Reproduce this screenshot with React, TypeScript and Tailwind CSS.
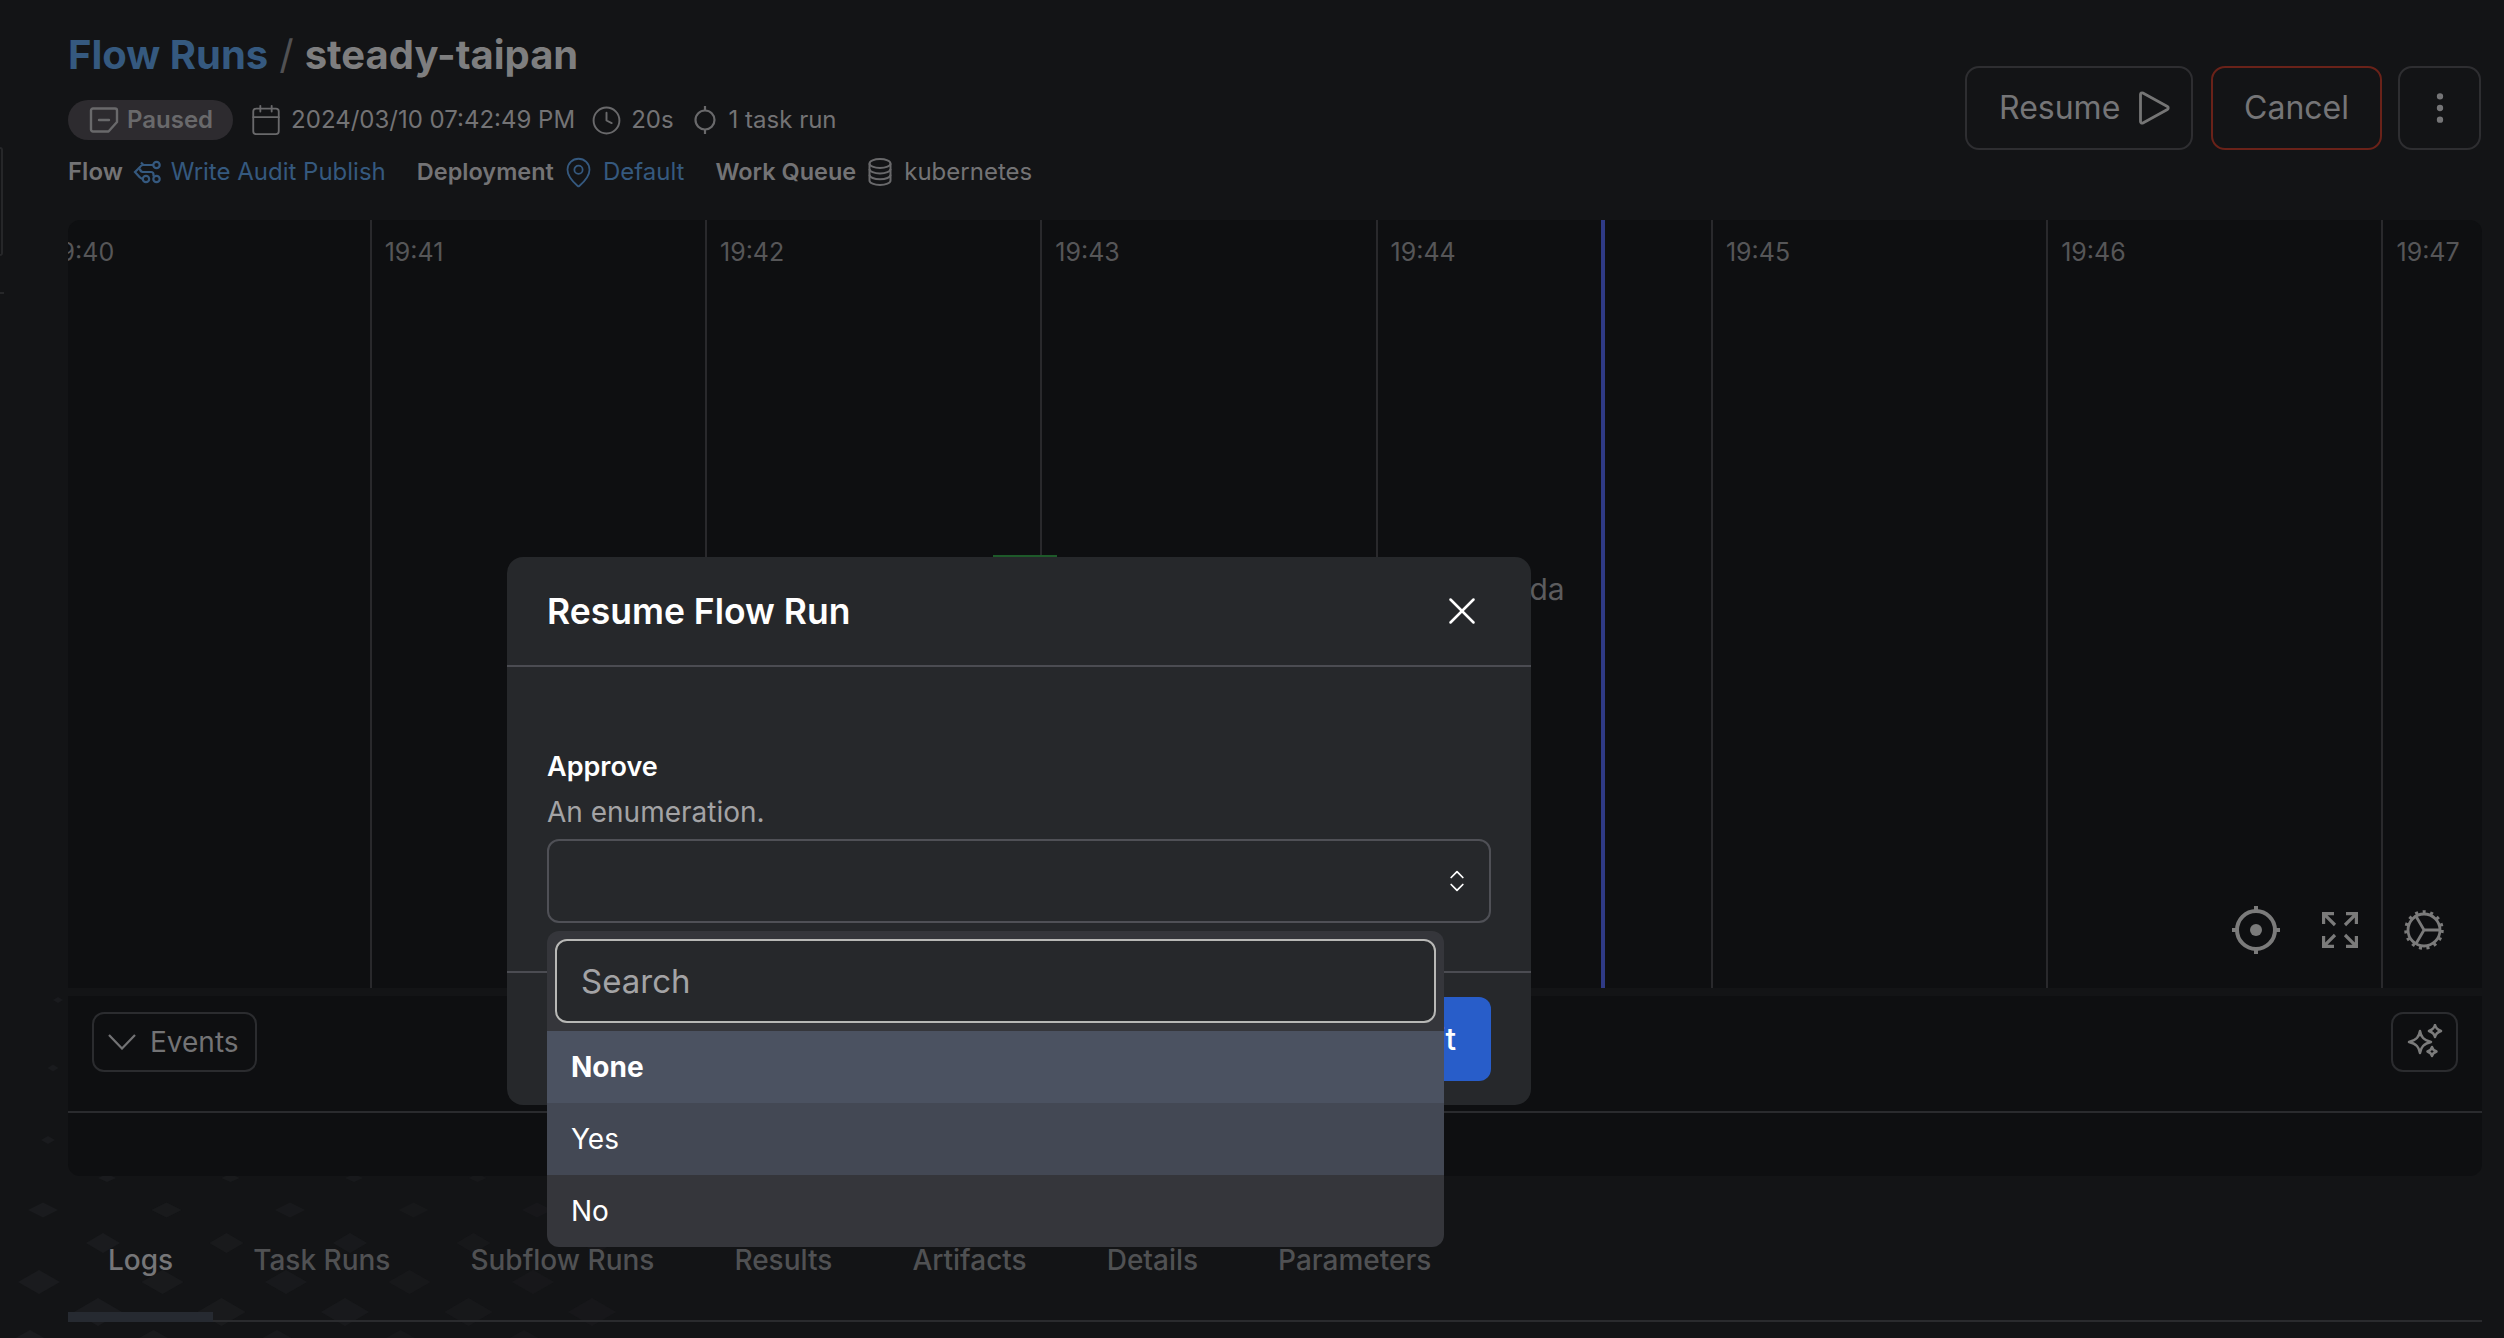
import { Calendar, ChevronsUpDown, Clock, EllipsisVertical, MapPin, X } from 'lucide-react';

const hours = ['19:40', '19:41', '19:42', '19:43', '19:44', '19:45', '19:46', '19:47'];
const tabs = ['Logs', 'Task Runs', 'Subflow Runs', 'Results', 'Artifacts', 'Details', 'Parameters'];

// faint diamonds behind the tab strip: y, first x, width, height
const diamondRows = [
  [1000, 58, 10, 6],
  [1068, 53, 11, 7],
  [1140, 48, 14, 8],
  [1178, 107, 18, 8],
  [1210, 43, 30, 15],
  [1243, 103, 34, 20],
  [1282, 39, 42, 24],
  [1312, 98, 48, 28],
  [1345, 30, 54, 30],
];

function Diamonds() {
  return (
    <svg className="absolute left-0 top-0" width="1000" height="1338" fill="#1a1b1e">
      {diamondRows.map(([y, x0, w, h]) =>
        [0, 1, 2, 3, 4].map((i) => {
          const x = x0 + i * 123.5;
          return (
            <polygon
              key={`${y}-${i}`}
              points={`${x - w / 2},${y} ${x},${y - h / 2} ${x + w / 2},${y} ${x},${y + h / 2}`}
              opacity={1 - i * 0.12}
            />
          );
        }),
      )}
    </svg>
  );
}

function PausedIcon() {
  return (
    <svg width="30" height="26" viewBox="0 0 30 26" fill="none" stroke="#69696b" strokeWidth="2.4" strokeLinejoin="round">
      <path d="M2 3.5A2 2 0 0 1 4 1.5h22a2 2 0 0 1 2 2V15l-8.5 9.5H4a2 2 0 0 1-2-2Z" />
      <path d="M10 13h10" strokeLinecap="round" />
    </svg>
  );
}

function TaskRunIcon() {
  return (
    <svg width="24" height="30" viewBox="0 0 24 30" fill="none" stroke="#69696b" strokeWidth="2.2">
      <circle cx="12" cy="15" r="9.5" />
      <path d="M12 1v4.5M12 24.5V29" />
    </svg>
  );
}

function FlowIcon() {
  return (
    <svg width="28" height="24" viewBox="0 0 28 24" fill="none" stroke="#35597f" strokeWidth="2.2">
      <circle cx="23.500" cy="5" r="3.200" />
      <circle cx="23.500" cy="19" r="3.200" />
      <circle cx="13" cy="19" r="3.200" />
      <path d="M20.300 5h-9.800a4 4 0 0 0-3.500 2L2 12l4.500 5c.8.900 1.800 1.500 3.300 2" />
      <path d="M7 8.500A3.500 3.500 0 0 0 9.500 12h8.500a2.500 2.500 0 0 1 2.500 2.500v2" />
      <path d="M8 2.500 10.500 5" />
    </svg>
  );
}

function StackIcon() {
  return (
    <svg width="24" height="28" viewBox="0 0 24 28" fill="none" stroke="#69696b" strokeWidth="2">
      <ellipse cx="12" cy="5.500" rx="10.500" ry="4.500" />
      <path d="M1.500 5.500v17c0 2.500 4.700 4.500 10.500 4.500s10.500-2 10.500-4.500v-17" />
      <path d="M1.500 11c0 2.500 4.700 4.500 10.500 4.500S22.500 13.500 22.500 11" />
      <path d="M1.500 16.800c0 2.500 4.700 4.500 10.500 4.500s10.500-2 10.500-4.500" />
    </svg>
  );
}

function PlayIcon() {
  return (
    <svg width="32" height="34" viewBox="0 0 32 34" fill="none" stroke="#757575" strokeWidth="2.800" strokeLinejoin="round">
      <path d="M2.500 3.500c0-1.300 1.300-2 2.400-1.400l24.500 13.500c1.100.6 1.100 2.200 0 2.800L4.900 31.900c-1.100.6-2.400-.1-2.400-1.400Z" />
    </svg>
  );
}

function TargetIcon() {
  return (
    <svg width="48" height="48" viewBox="0 0 48 48" fill="none" stroke="#7b7b7b" strokeWidth="4">
      <circle cx="24" cy="24" r="19" />
      <circle cx="24" cy="24" r="6" fill="#7b7b7b" stroke="none" />
      <path d="M24 0v6M24 42v6M0 24h6M42 24h6" />
    </svg>
  );
}

function ExpandIcon() {
  return (
    <svg width="36" height="36" viewBox="0 0 36 36" fill="none" stroke="#7b7b7b" strokeWidth="3.200">
      <path d="M1.600 12V1.600H12M1.600 1.600l11.400 11.400M34.400 12V1.600H24M34.400 1.600 23 13M1.600 24v10.400H12M1.600 34.400 13 23M34.400 24v10.400H24M34.400 34.400 23 23" />
    </svg>
  );
}

function GearIcon() {
  return (
    <svg width="40" height="40" viewBox="0 0 40 40" fill="none" stroke="#7b7b7b">
      <circle cx="20" cy="20" r="16" strokeWidth="2.800" />
      <circle cx="20" cy="20" r="18" strokeWidth="3.500" strokeDasharray="3 4.540" />
      <path d="M20 20h16M20 20l-8-13.800M20 20l-8 13.800" strokeWidth="2.800" />
    </svg>
  );
}

function SparkIcon() {
  return (
    <svg width="36" height="36" viewBox="0 0 36 36" fill="none" stroke="#7b7b7b" strokeWidth="2.500" strokeLinejoin="round">
      <path d="M13 7c1 6 3.500 9 11 11-7.500 2-10 5-11 11-1-6-3.500-9-11-11 7.500-2 10-5 11-11Z" />
      <path d="M28 1c.6 3 2 4.500 6 6-4 1.500-5.400 3-6 6-.6-3-2-4.500-6-6 4-1.500 5.400-3 6-6Z" />
      <path d="M25 23c.4 2.200 1.500 3.300 4.500 4.500-3 1.200-4.100 2.300-4.500 4.500-.4-2.200-1.500-3.300-4.500-4.500 3-1.200 4.100-2.300 4.500-4.500Z" />
    </svg>
  );
}

function ChartPanel() {
  return (
    <div className="relative h-[768px] overflow-hidden rounded-t-xl bg-[#0e0f11]">
      <div className="-ml-[33.600px] flex h-full">
        {hours.map((hour) => (
          <div key={hour} className="h-full w-[335.300px] shrink-0 border-l-2 border-[#29292c] pl-[13px] pt-[17px] text-[25px] leading-[30px] text-[#565658]">
            {hour}
          </div>
        ))}
      </div>
      <div className="absolute left-[1533px] top-0 h-full w-[4px] bg-[#2f3a85]" />
      <div className="absolute left-[925px] top-[335px] h-[3px] w-[64px] bg-[#1e5a2a]" />
      <div className="absolute left-[1383px] top-[349px] text-[30px] leading-[40px] text-[#5c5c5e]">Lambda</div>
      <div className="absolute left-[2164px] top-[686px] flex items-center">
        <TargetIcon />
        <div className="ml-[42px]">
          <ExpandIcon />
        </div>
        <div className="ml-[46px]">
          <GearIcon />
        </div>
      </div>
    </div>
  );
}

function EventsPanel() {
  return (
    <div className="mt-2 h-[180px] rounded-b-xl bg-[#0e0f11]">
      <div className="flex h-[117px] items-start justify-between border-b-2 border-[#2a2b2e] px-6 pt-4">
        <button className="flex h-[60px] w-[165px] items-center gap-[14px] rounded-xl border-2 border-[#2b2c2f] pl-[14px] text-[28px] text-[#737375]">
          <svg width="28" height="16" viewBox="0 0 28 16" fill="none" stroke="#737375" strokeWidth="2.200">
            <path d="M1 1l13 13.500L27 1" />
          </svg>
          Events
        </button>
        <button className="flex h-[60px] w-[67px] items-center justify-center rounded-xl border-2 border-[#2b2c2f]">
          <SparkIcon />
        </button>
      </div>
    </div>
  );
}

function ResumeModal() {
  return (
    <div className="absolute left-[507px] top-[557px] flex h-[548px] w-[1024px] flex-col rounded-2xl bg-[#26282b]">
      <div className="flex h-[110px] items-center justify-between border-b-2 border-[#4b4c52] pl-10 pr-[46px]">
        <h2 className="mt-[2px] text-[35.500px] font-semibold text-white">Resume Flow Run</h2>
        <X size={46} strokeWidth={1.300} className="text-white" />
      </div>
      <div className="h-[306px] border-b-2 border-[#4b4c52] px-10 pt-[84px]">
        <div className="text-[27px] font-semibold leading-[32px] text-white">Approve</div>
        <div className="mt-[13px] text-[28px] leading-[32px] text-[#a3a3a5]">An enumeration.</div>
        <div className="mt-[11px] flex h-[84px] items-center justify-end rounded-xl border-2 border-[#4f5056] pr-[18px]">
          <ChevronsUpDown size={28} strokeWidth={1.500} className="text-white" />
        </div>
      </div>
      <div className="flex justify-end gap-4 px-10 pt-6">
        <button className="h-[84px] rounded-xl bg-[#285dc9] px-[35px] text-[31px] font-medium text-white">Submit</button>
      </div>

      <div className="absolute left-10 top-[374px] w-[897px] overflow-hidden rounded-xl bg-[#35363b]">
        <div className="p-2">
          <input
            readOnly
            placeholder="Search"
            className="h-[84px] w-full rounded-xl border-2 border-[#b8b8b6] bg-[#26282b] px-[24px] text-[33px] outline-none placeholder:text-[#a3a3a5]"
          />
        </div>
        <div className="flex h-[72px] items-center bg-[#4b5261] pl-6 text-[28px] font-bold text-white">None</div>
        <div className="flex h-[72px] items-center bg-[#434854] pl-6 text-[28px] text-white">Yes</div>
        <div className="flex h-[72px] items-center pl-6 text-[28px] text-white">No</div>
      </div>
    </div>
  );
}

export default function App() {
  return (
    <div className="relative h-[1338px] w-[2504px] overflow-hidden bg-[#131416] font-['Inter',sans-serif]">
      <Diamonds />
      <div className="absolute left-0 top-[147px] h-[109px] w-[3px] rounded-r-md border-y-2 border-r-2 border-[#262729]" />
      <div className="absolute left-0 top-[292px] h-[2px] w-[4px] bg-[#262729]" />

      <div className="relative pl-[68px]">
        <header className="flex h-[220px] items-start justify-between pr-[23px]">
          <div className="pt-[31px]">
            <h1 className="flex items-center gap-[11px] text-[40px] font-bold leading-[48px]">
              <span className="text-[#35597f]">Flow Runs</span>
              <span className="font-normal text-[#515153]">/</span>
              <span className="text-[#7e7e7f]">steady-taipan</span>
            </h1>
            <div className="mt-[21px] flex h-[40px] items-center gap-4 text-[24px] text-[#737375]">
              <span className="flex h-[40px] items-center gap-[8px] rounded-full bg-[#2d2b2f] pl-[21px] pr-[20px] font-semibold text-[#69696b]">
                <PausedIcon />
                Paused
              </span>
              <span className="flex items-center gap-2">
                <Calendar size={34} strokeWidth={1.300} className="text-[#69696b]" />
                2024/03/10 07:42:49 PM
              </span>
              <span className="flex items-center gap-[9px]">
                <Clock size={31} strokeWidth={1.500} className="text-[#69696b]" />
                20s
              </span>
              <span className="ml-[3px] flex items-center gap-3">
                <TaskRunIcon />
                1 task run
              </span>
            </div>
            <div className="mt-4 flex h-[32px] items-center gap-[31px] text-[24px] text-[#737375]">
              <span className="flex items-center gap-[10px]">
                <span className="font-semibold">Flow</span>
                <FlowIcon />
                <span className="text-[#35597f]">Write Audit Publish</span>
              </span>
              <span className="flex items-center gap-2">
                <span className="text-[23.500px] font-semibold">Deployment</span>
                <MapPin size={33} strokeWidth={1.300} className="text-[#35597f]" />
                <span className="text-[#35597f]">Default</span>
              </span>
              <span className="flex items-center gap-3">
                <span className="text-[23.500px] font-semibold">Work Queue</span>
                <StackIcon />
                kubernetes
              </span>
            </div>
          </div>
          <div className="mt-[66px] flex gap-[18px] text-[32px] text-[#757577]">
            <button className="flex h-[84px] w-[228px] items-center gap-[18px] rounded-[14px] border-2 border-[#2e2e31] pl-[32px]">
              Resume
              <PlayIcon />
            </button>
            <button className="h-[84px] w-[171px] rounded-[14px] border-2 border-[#6a2219]">Cancel</button>
            <button className="-ml-[2px] flex h-[84px] w-[83px] items-center justify-center rounded-[14px] border-2 border-[#2e2e31]">
              <EllipsisVertical size={40} strokeWidth={1.800} />
            </button>
          </div>
        </header>

        <div className="w-[2414px]">
          <ChartPanel />
          <EventsPanel />
        </div>

        <nav className="mt-[64px] flex h-[82px] w-[2414px] border-b-2 border-[#2a2b2e]">
          {tabs.map((tab, i) => (
            <div
              key={tab}
              className={`h-[82px] border-b-[10px] px-10 pt-[3px] text-[28px] font-medium leading-[34px] ${
                i === 0 ? 'border-[#262a31] text-[#767678]' : 'border-transparent text-[#505153]'
              }`}
            >
              {tab}
            </div>
          ))}
        </nav>
      </div>

      <ResumeModal />
    </div>
  );
}
